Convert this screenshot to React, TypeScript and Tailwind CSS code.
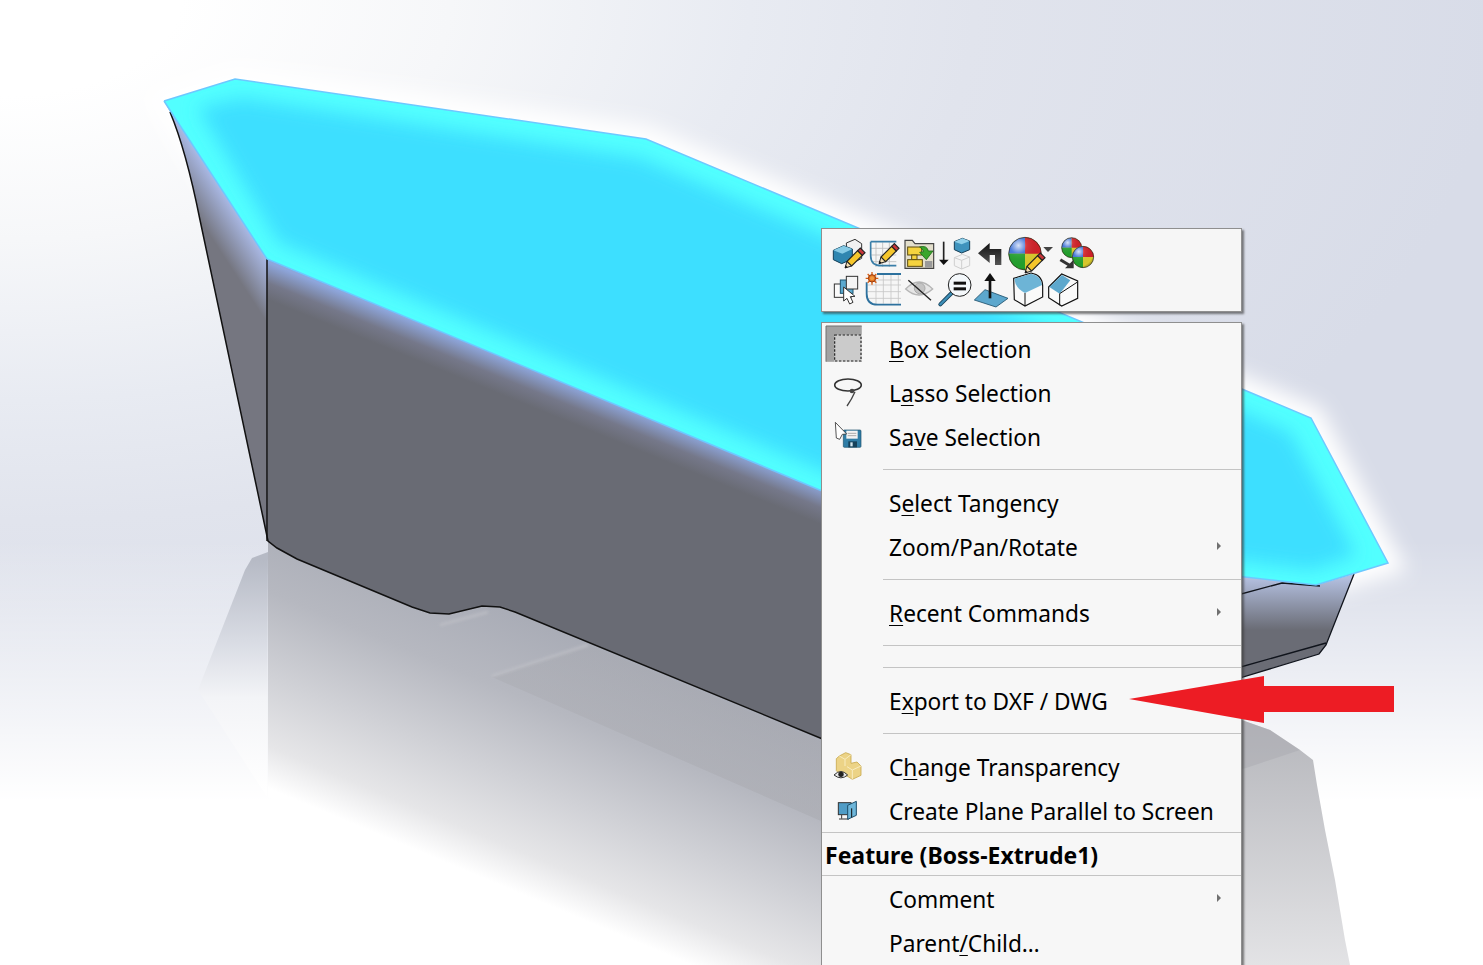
import type { ReactNode } from 'react'

const font = 'font-["Noto_Sans","Open_Sans",sans-serif]'

// viewBox is in 3x crop coords, so shapes are traced straight from the reference
function Ico({ x, y, w, h, children }: { x: number; y: number; w: number; h: number; children: ReactNode }) {
  return (
    <svg width={w / 3} height={h / 3} viewBox={`${x} ${y} ${w} ${h}`} className="shrink-0 overflow-visible">
      {children}
    </svg>
  )
}

function Pencil({ x, y, s = 1 }: { x: number; y: number; s?: number }) {
  return (
    <g transform={`translate(${x} ${y}) scale(${s})`}>
      <path d="M0 0 L6 -20 L20 -6 Z" fill="#f1dcb0" stroke="#222" strokeWidth="3" />
      <path d="M0 0 L2 -8 L8 -2 Z" fill="#111" />
      <path d="M6 -20 L38 -52 L52 -38 L20 -6 Z" fill="#f5c62c" stroke="#222" strokeWidth="3.5" />
      <path d="M38 -52 L46 -60 L60 -46 L52 -38 Z" fill="#c8353a" stroke="#222" strokeWidth="3.5" />
    </g>
  )
}

function PartPencil() {
  return (
    <Ico x={30} y={33} w={105} h={105}>
      <path d="M76 54 L102 43 L122 56 L122 100 L100 112 L78 100 Z" fill="#f2f2f2" stroke="#333" strokeWidth="3" />
      <path d="M37 76 L68 62 L94 72 L94 102 L62 116 L37 104 Z" fill="#2f86b0" stroke="#143f58" strokeWidth="3" />
      <path d="M37 76 L68 62 L94 72 L64 86 Z" fill="#86cbe6" />
      <Pencil x={72} y={129} />
    </Ico>
  )
}

function SketchPencil() {
  return (
    <Ico x={135} y={33} w={111} h={105}>
      <path d="M165 52 V126 M185 52 V126 M205 52 V126 M150 70 H226 M150 90 H226 M150 110 H226" stroke="#bdbdbd" strokeWidth="2.5" fill="none" />
      <path d="M149 50 H226 M149 50 V92 Q149 122 182 122 H226" stroke="#3a7ea8" strokeWidth="5" fill="none" />
      <Pencil x={174} y={116} />
    </Ico>
  )
}

function FolderArrow() {
  return (
    <Ico x={246} y={33} w={99} h={105}>
      <path d="M252 130 V46 H274 L282 56 H338 V130 Z" fill="#e3dfcc" stroke="#444" strokeWidth="3.5" />
      <rect x="260" y="66" width="42" height="24" fill="#f5d33f" stroke="#5a4a10" strokeWidth="3" />
      <rect x="272" y="90" width="16" height="14" fill="#f5d33f" stroke="#5a4a10" strokeWidth="3" />
      <rect x="260" y="104" width="44" height="20" fill="#f5d33f" stroke="#5a4a10" strokeWidth="3" />
      <path d="M296 66 Q318 60 322 78 L336 78 L316 104 L296 82 L308 80 Q306 72 296 66 Z" fill="#3ca62c" stroke="#1e6a18" strokeWidth="2.5" />
      <rect x="312" y="108" width="22" height="20" fill="#9a9a9a" />
    </Ico>
  )
}

function DownCubes() {
  return (
    <Ico x={345} y={33} w={114} h={105}>
      <path d="M368 50 V106" stroke="#222" strokeWidth="5" />
      <path d="M354 104 H383 L368 120 Z" fill="#111" />
      <path d="M400 50 L424 40 L446 48 L446 74 L422 84 L400 74 Z" fill="#3e93bd" stroke="#173f57" strokeWidth="3" />
      <path d="M400 50 L424 40 L446 48 L422 58 Z" fill="#8fd0ea" />
      <path d="M400 98 L424 88 L446 96 L446 122 L422 132 L400 122 Z M400 98 L422 106 L446 96 M422 106 V132" fill="#f4f4f4" stroke="#cfcfcf" strokeWidth="3" />
    </Ico>
  )
}

function BackArrow() {
  return (
    <Ico x={459} y={33} w={96} h={105}>
      <defs>
        <linearGradient id="back" x1="0" y1="0" x2="0" y2="1">
          <stop offset="0" stopColor="#111" />
          <stop offset="1" stopColor="#555" />
        </linearGradient>
      </defs>
      <path d="M471 85 L506 54 V72 H541 V120 H522 V90 H506 V114 Z" fill="url(#back)" />
    </Ico>
  )
}

function Ball({ cx, cy, r }: { cx: number; cy: number; r: number }) {
  return (
    <g>
      <circle cx={cx} cy={cy} r={r} fill="#d8c92c" />
      <path d={`M${cx} ${cy} V${cy - r} A${r} ${r} 0 0 0 ${cx - r} ${cy} Z`} fill="#3a6fd6" />
      <path d={`M${cx} ${cy} V${cy - r} A${r} ${r} 0 0 1 ${cx + r} ${cy} Z`} fill="#cf2027" />
      <path d={`M${cx} ${cy} H${cx - r} A${r} ${r} 0 0 0 ${cx} ${cy + r} Z`} fill="#22a02c" />
      <circle cx={cx} cy={cy} r={r} fill="url(#ballShade)" />
      <circle cx={cx} cy={cy} r={r} fill="none" stroke="#222" strokeWidth="2" />
    </g>
  )
}

function BallPencil() {
  return (
    <Ico x={555} y={33} w={153} h={105}>
      <defs>
        <radialGradient id="ballShade" cx="0.3" cy="0.25" r="0.85">
          <stop offset="0" stopColor="#fff" stopOpacity="0.8" />
          <stop offset="0.3" stopColor="#fff" stopOpacity="0.1" />
          <stop offset="0.8" stopColor="#000" stopOpacity="0" />
          <stop offset="1" stopColor="#000" stopOpacity="0.35" />
        </radialGradient>
      </defs>
      <Ball cx={612} cy={86} r={49} />
      <Pencil x={612} y={144} />
      <path d="M667 66 H696 L681 81 Z" fill="#444" />
    </Ico>
  )
}

function TwoBalls() {
  return (
    <Ico x={708} y={33} w={117} h={105}>
      <Ball cx={752} cy={68} r={30} />
      <Ball cx={786} cy={96} r={32} />
      <path d="M718 104 L748 122" stroke="#333" strokeWidth="9" />
      <path d="M758 104 V130 H732 Z" fill="#333" />
    </Ico>
  )
}

function CopyCursor() {
  return (
    <Ico x={30} y={138} w={96} h={108}>
      <rect x="40" y="177" width="50" height="40" fill="#fafafa" stroke="#333" strokeWidth="3" />
      <rect x="58" y="165" width="38" height="40" fill="#5ba9cf" stroke="#1f5672" strokeWidth="3" />
      <rect x="76" y="154" width="34" height="38" fill="#f4f4f4" stroke="#333" strokeWidth="3" />
      <path d="M68 186 L102 214 L88 215 L96 232 L86 237 L78 220 L68 228 Z" fill="#fff" stroke="#333" strokeWidth="3" />
    </Ico>
  )
}

function SketchSun() {
  return (
    <Ico x={126} y={138} w={120} h={108}>
      <path d="M165 150 V236 M187 150 V236 M210 150 V236 M232 150 V236 M140 180 H240 M140 200 H240 M140 220 H240 M170 165 H240" stroke="#c6c6c6" strokeWidth="2.5" fill="none" />
      <path d="M168 147 H240 M137 172 V206 Q137 239 170 239 H240" stroke="#2d719e" strokeWidth="5.5" fill="none" />
      <path d="M153 141 V179 M134 160 H172 M140 147 L166 173 M166 147 L140 173" stroke="#d85f16" strokeWidth="4" />
      <circle cx="153" cy="160" r="11" fill="#e2701e" stroke="#9a3c0c" strokeWidth="3" />
      <circle cx="153" cy="160" r="6" fill="#f09a40" />
    </Ico>
  )
}

function EyeSlash() {
  return (
    <Ico x={246} y={138} w={99} h={108}>
      <path d="M254 192 Q294 150 335 192 Q294 228 254 192 Z" fill="#e6e6e6" stroke="#b5b5b5" strokeWidth="4" />
      <circle cx="296" cy="190" r="16" fill="#c4c4c4" stroke="#aaa" strokeWidth="3" />
      <path d="M262 166 L330 226" stroke="#222" strokeWidth="4" />
    </Ico>
  )
}

function Magnifier() {
  return (
    <Ico x={345} y={138} w={111} h={108}>
      <path d="M392 204 L358 238" stroke="#173f57" strokeWidth="12" strokeLinecap="round" />
      <path d="M392 204 L358 238" stroke="#3d8fb8" strokeWidth="7" strokeLinecap="round" />
      <circle cx="416" cy="180" r="34" fill="#f4f8fb" stroke="#222" strokeWidth="3" />
      <rect x="398" y="170" width="37" height="9" fill="#111" />
      <rect x="398" y="187" width="37" height="9" fill="#111" />
    </Ico>
  )
}

function PlaneUp() {
  return (
    <Ico x={456} y={138} w={114} h={108}>
      <path d="M460 225 L492 194 L561 220 L525 246 Z" fill="#5ca7cd" stroke="#1d4f6b" strokeWidth="2.5" />
      <path d="M507 220 V164" stroke="#111" strokeWidth="8" />
      <path d="M490 168 L507 144 L524 168 Z" fill="#111" />
    </Ico>
  )
}

function CubeRound() {
  return (
    <Ico x={570} y={138} w={105} h={108}>
      <path d="M578 160 L630 144 Q664 150 665 182 V216 L612 243 L580 224 Z" fill="#fafafa" stroke="#111" strokeWidth="3.5" />
      <path d="M580 161 L630 146 Q660 152 663 180 L612 204 Q584 192 580 161 Z" fill="#6db4d6" />
      <path d="M612 204 V243" stroke="#111" strokeWidth="3" />
    </Ico>
  )
}

function CubeSlant() {
  return (
    <Ico x={675} y={138} w={105} h={108}>
      <path d="M683 186 L722 147 L770 168 V220 L722 243 L683 218 Z" fill="#fafafa" stroke="#111" strokeWidth="3.5" />
      <path d="M685 186 L723 150 L748 166 L716 206 Z" fill="#5ea8cd" />
      <path d="M716 206 L768 172 M716 206 V241" stroke="#111" strokeWidth="3" />
    </Ico>
  )
}

function BoxIcon() {
  return (
    <Ico x={9} y={24} w={132} h={132}>
      <rect x="15" y="18" width="107" height="107" fill="#cbcbcb" />
      <path d="M15 18 H122 V44 H40 V125 H15 Z" fill="#a2a2a2" />
      <path d="M15 125 V18 H122" stroke="#707070" strokeWidth="3" fill="none" />
      <rect x="41" y="45" width="79" height="78" fill="#cbcbcb" stroke="#222" strokeWidth="3.5" strokeDasharray="7 5" />
    </Ico>
  )
}

function LassoIcon() {
  return (
    <Ico x={9} y={156} w={132} h={132}>
      <ellipse cx="81" cy="195" rx="40" ry="18" fill="none" stroke="#333" strokeWidth="4.5" />
      <circle cx="93" cy="213" r="7" fill="#444" />
      <path d="M102 215 Q92 238 78 258" stroke="#444" strokeWidth="4" fill="none" />
    </Ico>
  )
}

function SaveIcon() {
  return (
    <Ico x={9} y={288} w={132} h={132}>
      <rect x="67" y="330" width="53" height="52" rx="3" fill="#2f7da6" stroke="#1c5069" strokeWidth="2" />
      <rect x="76" y="332" width="34" height="24" fill="#f4f4f4" />
      <path d="M80 340 H106 M80 347 H106" stroke="#888" strokeWidth="2" />
      <rect x="82" y="364" width="26" height="18" fill="#16415a" />
      <rect x="88" y="367" width="7" height="12" fill="#cfe4ef" />
      <path d="M43 307 L77 342 L64 343 L56 358 L46 354 Z" fill="#fff" stroke="#333" strokeWidth="2.5" />
    </Ico>
  )
}

function TransparencyIcon() {
  return (
    <Ico x={9} y={18} w={132} h={132}>
      <path d="M55 48 L74 38 L90 44 V70 L108 66 L120 78 V106 L94 118 L78 108 H62 L46 92 V56 Z" fill="#ecd386" stroke="#c9a94e" strokeWidth="2.5" />
      <path d="M55 48 L72 58 L90 44 M72 58 V78 M78 80 L94 90 L120 78 M94 90 V118" fill="none" stroke="#f8ecc0" strokeWidth="3" />
      <path d="M39 105 Q60 84 80 105 Q60 122 39 105 Z" fill="#e8e8e8" stroke="#333" strokeWidth="3" />
      <circle cx="60" cy="103" r="8" fill="#222" />
    </Ico>
  )
}

function PlaneScreenIcon() {
  return (
    <Ico x={9} y={150} w={132} h={132}>
      <rect x="52" y="188" width="38" height="36" fill="#4f9cc6" stroke="#333" strokeWidth="3" />
      <path d="M62 225 V236 M54 237 H84" stroke="#333" strokeWidth="3" />
      <path d="M80 196 L106 184 V226 L80 238 Z" fill="#6db6da" stroke="#1d4f6b" strokeWidth="3" />
      <path d="M92 205 V232" stroke="#111" strokeWidth="3" />
    </Ico>
  )
}

const TOP_FACE = 'M164 101 L235 79 L646 139 L1311 418 L1388 563 L1316 585 L1200 572 L1040 582 L267 259 Z'

function Model() {
  return (
    <svg className="absolute inset-0" width="1483" height="965" viewBox="0 0 1483 965">
      <defs>
        <filter id="glow" x="-10%" y="-10%" width="120%" height="120%">
          <feGaussianBlur stdDeviation="10" />
        </filter>
        <filter id="soft" x="-10%" y="-10%" width="120%" height="120%">
          <feGaussianBlur stdDeviation="9" />
        </filter>
        <filter id="streak" x="-10%" y="-50%" width="120%" height="200%">
          <feGaussianBlur stdDeviation="1.5" />
        </filter>
        {/* the floor reflection fades away from the lower edge of the part */}
        <linearGradient id="floor" x1="540" y1="620" x2="440" y2="860" gradientUnits="userSpaceOnUse">
          <stop offset="0" stopColor="#a9acb6" />
          <stop offset="0.3" stopColor="#b6b8c0" />
          <stop offset="0.6" stopColor="#d0d1d6" />
          <stop offset="0.85" stopColor="#e6e6e8" />
          <stop offset="1" stopColor="#ffffff" />
        </linearGradient>
        <linearGradient id="floorBand" x1="0" y1="640" x2="0" y2="820" gradientUnits="userSpaceOnUse">
          <stop offset="0" stopColor="#a8a9af" stopOpacity="0.35" />
          <stop offset="1" stopColor="#a8a9af" stopOpacity="0.5" />
        </linearGradient>
        <linearGradient id="floorLeft" x1="0" y1="560" x2="0" y2="790" gradientUnits="userSpaceOnUse">
          <stop offset="0" stopColor="#b6bac5" />
          <stop offset="0.35" stopColor="#d8dbe3" />
          <stop offset="0.6" stopColor="#f3f4f7" />
          <stop offset="1" stopColor="#ffffff" />
        </linearGradient>
        <linearGradient id="floorRight" x1="0" y1="722" x2="0" y2="1000" gradientUnits="userSpaceOnUse">
          <stop offset="0" stopColor="#b6b7bc" />
          <stop offset="1" stopColor="#e9e9eb" />
        </linearGradient>
        <linearGradient id="sideFace" x1="215" y1="180" x2="186" y2="199" gradientUnits="userSpaceOnUse">
          <stop offset="0" stopColor="#a9b8e4" />
          <stop offset="1" stopColor="#757680" />
        </linearGradient>
        <linearGradient id="frontFace" x1="545" y1="375" x2="532" y2="407" gradientUnits="userSpaceOnUse">
          <stop offset="0" stopColor="#8ea6dc" />
          <stop offset="0.55" stopColor="#75788a" />
          <stop offset="1" stopColor="#696b74" />
        </linearGradient>
        <linearGradient id="rightFace" x1="0" y1="578" x2="0" y2="630" gradientUnits="userSpaceOnUse">
          <stop offset="0" stopColor="#b3bfdf" />
          <stop offset="1" stopColor="#6a6c75" />
        </linearGradient>
        <clipPath id="top">
          <path d={TOP_FACE} />
        </clipPath>
      </defs>

      {/* reflection on the floor */}
      <path d="M268 552 L252 558 L245 570 L198 690 L267 797 Z" fill="url(#floorLeft)" />
      <path d="M268 540 L500 590 L830 720 L830 1020 L268 797 Z" fill="url(#floor)" />
      <path d="M492 677 L588 645 L830 745 L830 825 Z" fill="url(#floorBand)" />
      <path d="M492 676 L588 645 M440 625 L488 612" stroke="#c0c1c7" strokeWidth="2.5" fill="none" filter="url(#streak)" opacity="0.8" />
      <path d="M1236 718 L1270 730 L1300 750 L1313 760 L1317 785 L1325 830 L1335 880 L1345 940 L1350 965 L1236 965 Z" fill="url(#floorRight)" />
      <path d="M1236 718 L1270 730 L1300 750 L1246 768 L1236 770 Z" fill="#a8a9af" opacity="0.45" />

      {/* glow round the lit face */}
      <path d={TOP_FACE} fill="#fff" stroke="#fff" strokeWidth="26" filter="url(#glow)" />

      {/* body */}
      <path d="M170 112 Q186 150 200 220 L268 541 L267 259 L164 101 Z" fill="url(#sideFace)" />
      <path d="M267 259 L1100 606 L1100 800 L821 738 L515 612 L500 607 L482 606 L449 614 L430 613 L412 607 L297 559 L277 548 L268 541 Z" fill="url(#frontFace)" />
      <path d="M170 112 Q186 150 200 220 L268 541 L277 548 L297 559 L412 607 L430 613 L449 614 L482 606 L500 607 L515 612 L825 740" fill="none" stroke="#111" strokeWidth="1.5" />
      <path d="M267 259 V541" stroke="#111" strokeWidth="1.5" />
      <path d="M1230 575 L1316 585 L1354 574 L1326 645 L1319 654 L1230 681 Z" fill="url(#rightFace)" />
      <path d="M1354 574 L1326 645 L1319 654 L1230 681 M1230 670 L1326 643 M1230 597 L1282 583 L1320 586" fill="none" stroke="#10141c" strokeWidth="1.3" />

      {/* lit top face */}
      <g clipPath="url(#top)">
        <path d={TOP_FACE} fill="#52ffff" />
        <path d="M198 108 L242 98 L640 158 L1290 432 L1356 555 L1312 570 L1200 556 L1040 562 L278 242 Z" fill="#3ddfff" filter="url(#soft)" />
      </g>
      <path d="M164 101 L235 79 L646 139 L1311 418 L1388 563 L1316 585 L1200 572 M1040 582 L267 259 L164 101" fill="none" stroke="#6cc8ff" strokeWidth="1.5" />
    </svg>
  )
}

function Mn({ children }: { children: ReactNode }) {
  return <span className="underline decoration-1 underline-offset-[3px]">{children}</span>
}

function Row({ icon, sub, children }: { icon?: ReactNode; sub?: boolean; children: ReactNode }) {
  return (
    <div className="flex h-[44px] items-center">
      <div className="ml-[2px] w-[65px] shrink-0">{icon}</div>
      <div className="whitespace-nowrap">{children}</div>
      {sub && <div className="mb-[5px] ml-auto mr-[20px] h-0 w-0 border-y-[4px] border-l-[4px] border-y-transparent border-l-[#707070]" />}
    </div>
  )
}

function Sep() {
  return (
    <div className="h-[22px] pl-[61px] pt-[9px]">
      <div className="h-px bg-[#c4c4c4]" />
    </div>
  )
}

export default function App() {
  return (
    <div className="relative h-[965px] w-[1483px] overflow-hidden bg-[linear-gradient(to_bottom,rgba(255,255,255,0)_56%,#ffffff_83%),radial-gradient(ellipse_1500px_800px_at_0px_0px,#ffffff_12%,#f6f7f9_30%,#e8ebf2_50%,#e1e4ed_65%,#d8dce8_100%)]">
      <Model />

      {/* flyout toolbar */}
      <div className="absolute left-[821px] top-[228px] h-[84px] w-[421px] border border-[#8f8f8f] bg-[#f6f6f6] pl-[9px] pt-[7px] shadow-[2px_2px_2px_rgba(60,60,60,0.65)]">
        <div className="flex">
          <PartPencil />
          <SketchPencil />
          <FolderArrow />
          <DownCubes />
          <BackArrow />
          <BallPencil />
          <TwoBalls />
        </div>
        <div className="flex">
          <CopyCursor />
          <SketchSun />
          <EyeSlash />
          <Magnifier />
          <PlaneUp />
          <CubeRound />
          <CubeSlant />
        </div>
      </div>

      {/* context menu, runs off the bottom of the window */}
      <div className={`absolute left-[821px] top-[322px] w-[421px] border border-[#8f8f8f] bg-[#f7f7f7] pb-[12px] pt-[5px] text-[22.7px] leading-[44px] text-black shadow-[2px_2px_2px_rgba(60,60,60,0.65)] ${font}`}>
        <Row icon={<BoxIcon />}><Mn>B</Mn>ox Selection</Row>
        <Row icon={<LassoIcon />}>L<Mn>a</Mn>sso Selection</Row>
        <Row icon={<SaveIcon />}>Sa<Mn>v</Mn>e Selection</Row>
        <Sep />
        <Row>S<Mn>e</Mn>lect Tangency</Row>
        <Row sub>Zoom/Pan/Rotate</Row>
        <Sep />
        <Row sub><Mn>R</Mn>ecent Commands</Row>
        <Sep />
        <Sep />
        <Row>E<Mn>x</Mn>port to DXF / DWG</Row>
        <Sep />
        <Row icon={<TransparencyIcon />}>C<Mn>h</Mn>ange Transparency</Row>
        <Row icon={<PlaneScreenIcon />}>Create Plane Parallel to Screen</Row>
        <div className="-mt-[2px] mb-[2px] h-[44px] border-y border-[#c4c4c4] pl-[3px] text-[23px] font-bold leading-[44px]">Feature (Boss-Extrude1)</div>
        <Row sub>Comment</Row>
        <Row>Parent<Mn>/</Mn>Child…</Row>
      </div>

      {/* red callout arrow */}
      <svg className="absolute left-[1125px] top-[672px]" width="272" height="56" viewBox="1125 672 272 56">
        <path d="M1129 699 L1264 676 V686 H1394 V712 H1264 V723 Z" fill="#ed1c24" />
      </svg>
    </div>
  )
}
